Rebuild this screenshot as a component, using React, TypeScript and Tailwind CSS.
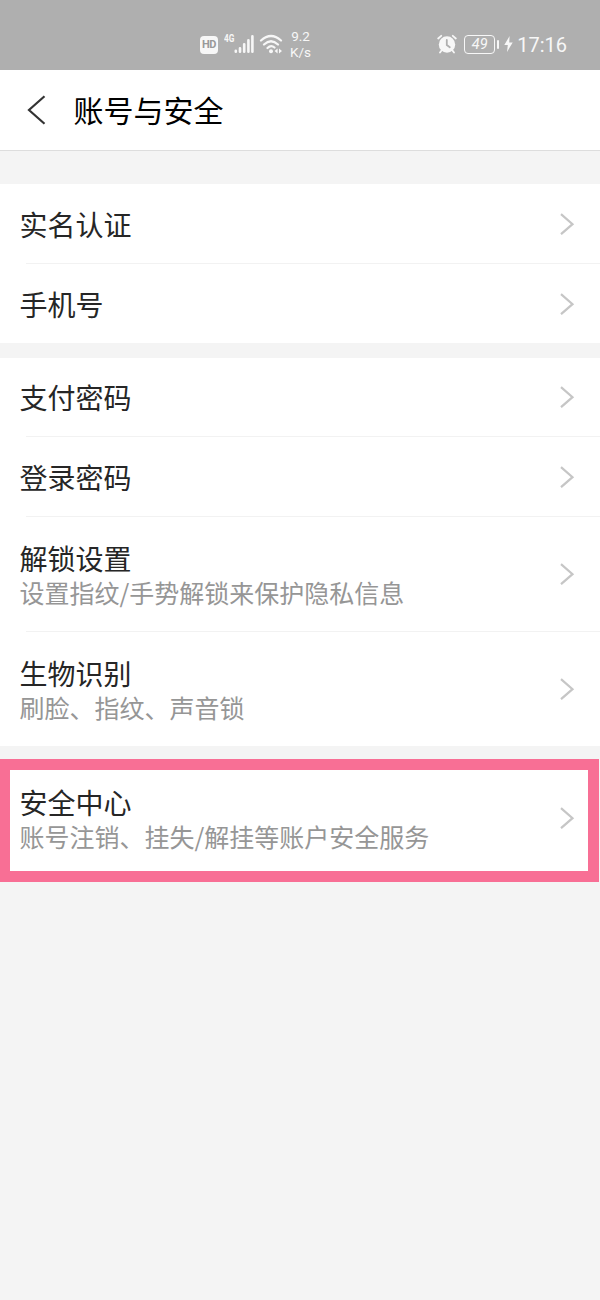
import clsx from 'clsx'

type Item = {
  title: string
  desc?: string
}

const basicItems: Item[] = [{ title: '实名认证' }, { title: '手机号' }]

const securityItems: Item[] = [
  { title: '支付密码' },
  { title: '登录密码' },
  { title: '解锁设置', desc: '设置指纹/手势解锁来保护隐私信息' },
  { title: '生物识别', desc: '刷脸、指纹、声音锁' },
]

const Chevron = () => (
  <svg className="w-4 h-[22px] shrink-0" viewBox="0 0 16 22" fill="none" stroke="#c6c6c6" strokeWidth="2.2">
    <path d="M2 1.2L13.5 11.2L2 21.2" />
  </svg>
)

const Row = ({ title, desc }: Item) => (
  <div className="flex-1 flex items-center justify-between pl-[19.5px] pr-[25px]">
    <div className={clsx('flex flex-col', desc && 'pt-0.5')}>
      <span className="text-[28px] leading-[34px] text-[#262626]">{title}</span>
      {desc && <span className="text-[25px] leading-[34px] text-[#969696]">{desc}</span>}
    </div>
    <Chevron />
  </div>
)

const Group = ({ items }: { items: Item[] }) => (
  <div className="bg-white">
    {items.map((item, i) => {
      const last = i === items.length - 1
      const height = item.desc
        ? last ? 'h-[114px]' : 'h-[115px]'
        : last || (i === 0 && items.length > 2) ? 'h-[79px]' : 'h-20'
      return (
        <div key={item.title} className={clsx('flex flex-col', height)}>
          <Row {...item} />
          {!last && <div className="h-px ml-[26px] bg-[#f2f2f2]" />}
        </div>
      )
    })}
  </div>
)

const StatusBar = () => (
  <div className="h-[70px] bg-[#afafaf] text-[#f7f7f7] pl-[200px] pr-[33px] pt-7 flex justify-between font-[Roboto,sans-serif]">
    <div className="flex h-8 items-center">
      <span className="w-[18px] h-[18px] mt-px rounded-[4px] bg-[#f7f7f7] text-[#999999] text-[11px] leading-[18px] tracking-[-0.5px] font-bold text-center">
        HD
      </span>
      <span className="w-[11px] ml-[6px] mb-[10px] text-[11px] leading-[10px] font-bold origin-left scale-x-75">4G</span>
      <svg className="w-5 h-5 ml-[-1px]" viewBox="0 0 20 20" stroke="currentColor" strokeWidth="2.6" strokeLinecap="round">
        <path d="M1.8 17.8V16.8M6 17.8V14.2M10.2 17.8V10.2M14.4 17.8V6.2M18.4 17.8V2.2" />
      </svg>
      <svg className="w-6 h-5 ml-[5px]" viewBox="0 0 24 20" fill="none" stroke="currentColor" strokeWidth="2.2" strokeLinecap="round">
        <path d="M2 6.5Q12 -2.5 22 6.5M5 10.5Q12 4 19 10.5M8.5 14Q12 10.5 15.5 13.5" />
        <circle cx="12" cy="17.3" r="2" fill="currentColor" stroke="none" />
        <path d="M18.6 14.5L15.6 17L18.6 19.5ZM20 14.5L23 17L20 19.5Z" fill="currentColor" stroke="none" />
      </svg>
      <div className="ml-[7px] text-[13.5px] leading-[16px] text-center">
        <div>9.2</div>
        <div>K/s</div>
      </div>
    </div>
    <div className="flex h-8 items-center">
      <svg className="w-5 h-5" viewBox="0 0 20 20" fill="none" stroke="currentColor" strokeWidth="1.8" strokeLinecap="round">
        <circle cx="10" cy="10.5" r="8.2" fill="currentColor" stroke="none" />
        <path d="M1.2 4.5L4.2 1.8M18.8 4.5L15.8 1.8M4.5 16.5L3 18.5M15.5 16.5L17 18.5" />
        <path d="M9.8 6V11L12.8 13.3" stroke="#afafaf" />
      </svg>
      <div className="ml-[7px] w-[31px] h-[19px] rounded-[4px] border-[1.5px] border-current text-[14.5px] leading-[17px] italic text-center">
        49
      </div>
      <div className="w-0.5 h-[9px] ml-[2px] bg-current rounded-full" />
      <svg className="w-[9px] h-4 ml-[5px]" viewBox="0 0 9 16" fill="currentColor">
        <path d="M5.6 0L0.3 9H3.8L3 16L8.7 6.6H5.2Z" />
      </svg>
      <span className="ml-1 mt-[2px] text-xl leading-6">17:16</span>
    </div>
  </div>
)

export default function App() {
  return (
    <div className="w-[600px] h-[1300px] bg-[#f4f4f4] font-['Noto_Sans_CJK_SC',sans-serif]">
      <StatusBar />
      <div className="h-[81px] bg-white border-b border-[#dddddd] flex items-center pl-[27px]">
        <svg className="w-5 h-[30px]" viewBox="0 0 20 30" fill="none" stroke="#333333" strokeWidth="2.2">
          <path d="M17.5 1.2L2 15L17.5 28.8" />
        </svg>
        <h1 className="ml-[26.5px] mb-0.5 text-[30px] leading-10 text-black">账号与安全</h1>
      </div>

      <div className="mt-[33px] flex flex-col">
        <Group items={basicItems} />
        <div className="h-[15px]" />
        <Group items={securityItems} />
      </div>

      <div className="mt-[13px] mr-px h-[123px] bg-white border-[11px] border-l-[10px] border-[#f86f95] flex">
        <div className="flex-1 flex -ml-[10px] -mr-[12px] pb-[5px]">
          <Row title="安全中心" desc="账号注销、挂失/解挂等账户安全服务" />
        </div>
      </div>
    </div>
  )
}
